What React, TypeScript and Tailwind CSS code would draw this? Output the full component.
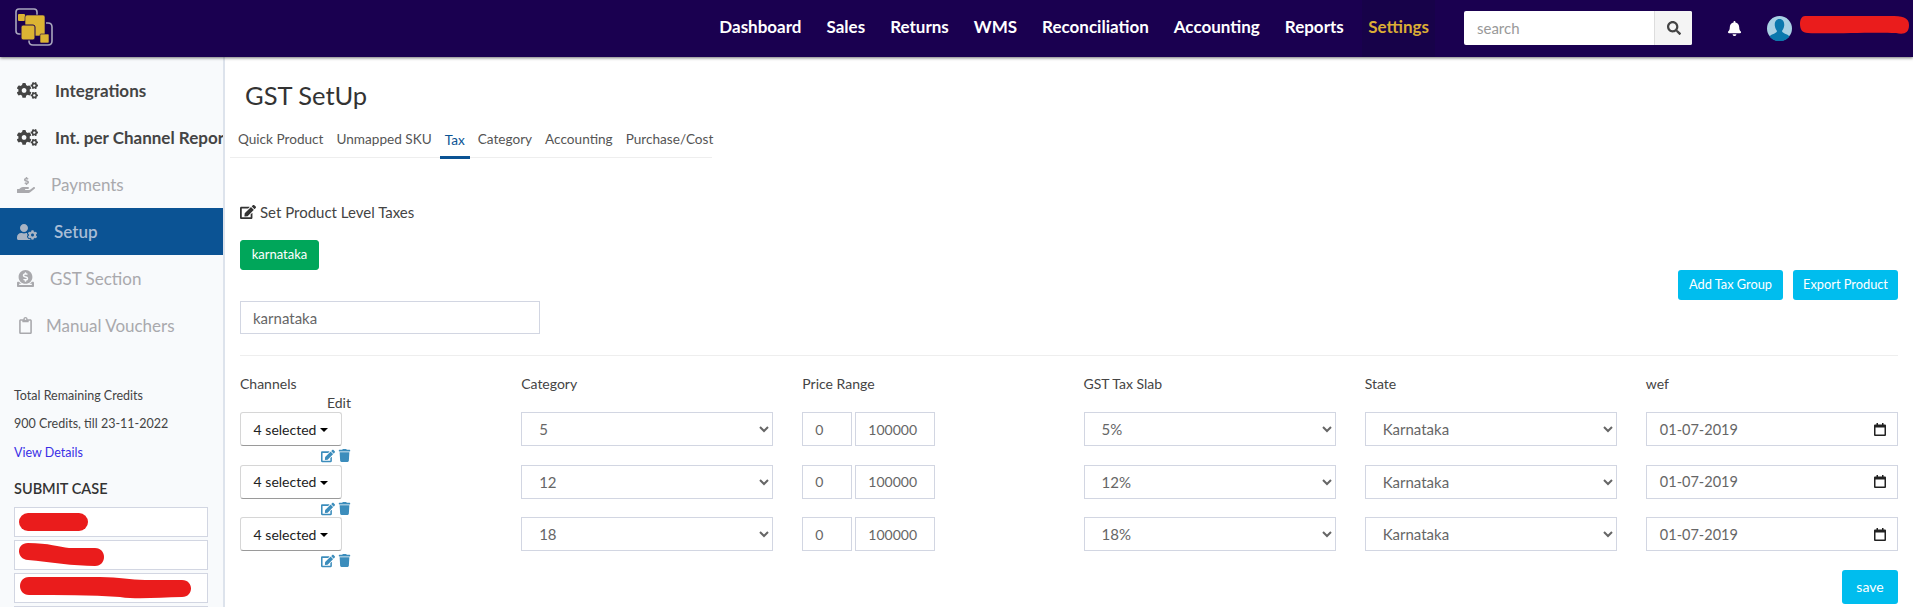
import React from "react";
import { FaCogs, FaHandHoldingUsd, FaUserCog, FaDonate, FaRegClipboard, FaEdit, FaTrash, FaSearch, FaBell } from "react-icons/fa";

const nav = ["Dashboard", "Sales", "Returns", "WMS", "Reconciliation", "Accounting", "Reports"];

function Logo() {
  return (
    <svg width="42" height="42" viewBox="0 0 42 42" fill="none">
      <path d="M9 26 H5 Q2 26 2 23 V4 Q2 1 5 1 H20 Q23 1 23 4 V7" stroke="#a9a6bd" strokeWidth="1.6" />
      <path d="M32 15 H34 Q38 15 38 19 V33 Q38 37 34 37 H19 Q15 37 15 33 V31" stroke="#a9a6bd" strokeWidth="1.6" />
      <rect x="4" y="6" width="7" height="7" rx="1" fill="#dcb333" />
      <rect x="11" y="7" width="20" height="21" rx="2" fill="#dcb333" stroke="#1a0050" strokeWidth="0.6" />
      <rect x="7" y="17" width="14" height="15" rx="2" fill="#dcb333" stroke="#1a0050" strokeWidth="1" />
      <rect x="26" y="26" width="9" height="9" rx="1" fill="#dcb333" stroke="#1a0050" strokeWidth="0.6" />
    </svg>
  );
}

function Avatar() {
  return (
    <svg width="25" height="25" viewBox="0 0 25 25">
      <circle cx="12.5" cy="12.5" r="12.5" fill="#a8d1e4" />
      <path d="M12.5 3 C9 3 7.5 6 7.8 9.5 C8 12 9.2 14 10 15 C10 16.5 8 17.3 5 18.5 C3.8 19 3 20 2.6 20.5 A12.5 12.5 0 0 0 22.4 20.5 C22 20 21.2 19 20 18.5 C17 17.3 15 16.5 15 15 C15.8 14 17 12 17.2 9.5 C17.5 6 16 3 12.5 3Z" fill="#0a78ad" />
    </svg>
  );
}

function SideItem({ icon, label, cls, gap }: { icon: React.ReactNode; label: string; cls: string; gap: string }) {
  return (
    <div className={`flex h-[47px] items-center overflow-hidden whitespace-nowrap pl-[17px] ${cls}`}>
      <span className={`flex shrink-0 ${gap}`}>{icon}</span>
      <span>{label}</span>
    </div>
  );
}

function Caret() {
  return <span className="ml-[4px] mt-[2px] inline-block border-x-[4px] border-t-[4px] border-x-transparent border-t-black" />;
}

function Sel({ value }: { value: string }) {
  return (
    <select
      defaultValue={value}
      className="h-[34px] w-full border border-[#d2d6e2] bg-white pl-[13px] text-[15px] text-[#666]"
    >
      <option>{value}</option>
    </select>
  );
}

function CalendarIcon() {
  return (
    <svg width="12" height="13" viewBox="0 0 12 13" className="shrink-0">
      <path d="M1 1.5h1.5V0h1.5v1.5h4V0h1.5v1.5H11a1 1 0 0 1 1 1V12a1 1 0 0 1-1 1H1a1 1 0 0 1-1-1V2.5a1 1 0 0 1 1-1Z M1.5 4.5V11.5h9V4.5Z" fill="#222" fillRule="evenodd" />
    </svg>
  );
}

function Row({ cat, slab }: { cat: string; slab: string }) {
  return (
    <div className="grid h-[52.5px] grid-cols-6 gap-x-[29px]">
      <div>
        <button className="flex h-[34px] w-[102px] items-center justify-center rounded-[3px] border border-[#d6d6d6] border-b-[#9a9a9a] bg-white text-[14px] text-[#222]">
          4 selected
          <Caret />
        </button>
        <div className="mt-[3px] flex w-[111px] justify-end gap-[3px] text-[14px] text-[#3c8dbc]">
          <FaEdit />
          <FaTrash className="text-[13px]" />
        </div>
      </div>
      <Sel value={cat} />
      <div className="flex gap-[3px]">
        <input readOnly value="0" className="h-[34px] w-[50px] border border-[#d2d6e2] pl-[12px] text-[14px] text-[#666]" />
        <input readOnly value="100000" className="h-[34px] w-[80px] border border-[#d2d6e2] pl-[12px] text-[14px] text-[#666]" />
      </div>
      <Sel value={slab} />
      <Sel value="Karnataka" />
      <div className="flex h-[34px] items-center justify-between border border-[#d2d6e2] pl-[13px] pr-[11px] text-[14.5px] text-[#666]">
        <span>01-07-2019</span>
        <CalendarIcon />
      </div>
    </div>
  );
}

export default function App() {
  return (
    <div className="flex h-[607px] flex-col overflow-hidden bg-white font-['Lato','Noto_Sans',sans-serif] text-[14px] text-[#444]">
      <header className="relative z-10 flex h-[57px] shrink-0 items-center bg-[#1a0050] shadow-[0_1px_3px_rgba(0,0,0,0.55)]">
        <div className="ml-[14px]">
          <Logo />
        </div>
        <nav className="ml-auto flex h-full items-stretch pb-[3px] text-[17px] font-bold text-white">
          {nav.map((n) => (
            <a key={n} className="flex items-center px-[12.5px]">{n}</a>
          ))}
          <a className="-mb-[3px] ml-[6px] flex items-center bg-[#170249] px-[6px] pb-[3px] text-[#dcae35]">Settings</a>
        </nav>
        <div className="-mt-[1px] ml-[29px] flex h-[34px] w-[228px] overflow-hidden rounded-[2px] bg-white">
          <input placeholder="search" className="min-w-0 flex-1 pl-[13px] text-[15px] text-[#555] placeholder:text-[#999] outline-none" />
          <span className="flex w-[38px] items-center justify-center border-l border-[#ddd] bg-[#f4f4f4] text-[14px] text-[#444]">
            <FaSearch />
          </span>
        </div>
        <span className="ml-[35px] text-[15px] text-white"><FaBell /></span>
        <span className="ml-[25px] flex"><Avatar /></span>
        <svg className="mb-[8px] ml-[8px] mr-[4px]" width="109" height="20" viewBox="0 0 109 20">
          <path d="M5 1 H90 C102 1 109 2 109 10 C109 18 104 20 96 18 C70 17 30 19 8 18 C2 18 0 14 0 9 C0 4 2 1 5 1Z" fill="#ea1c1c" />
        </svg>
      </header>

      <div className="flex min-h-0 flex-1">
        <aside className="w-[225px] shrink-0 border-r-2 border-[#dde3ec] bg-[#f8fafc] pt-[10px] text-[17px]">
          <SideItem icon={<FaCogs className="text-[21px] text-[#444]" />} label="Integrations" cls="font-bold text-[#444]" gap="w-[38px]" />
          <SideItem icon={<FaCogs className="text-[21px] text-[#444]" />} label="Int. per Channel Reports" cls="font-bold text-[#444]" gap="w-[38px]" />
          <SideItem icon={<FaHandHoldingUsd className="text-[18px] text-[#a9a9ad]" />} label="Payments" cls="text-[#a9a9ad]" gap="w-[34px]" />
          <SideItem icon={<FaUserCog className="text-[20px] text-[#a9b4c4]" />} label="Setup" cls="bg-[#0b5394] text-[#a9bdd6] font-semibold" gap="w-[37px]" />
          <SideItem icon={<FaDonate className="text-[17px] text-[#a9a9ad]" />} label="GST Section" cls="text-[#a9a9ad]" gap="w-[33px]" />
          <SideItem icon={<FaRegClipboard className="text-[17px] text-[#a9a9ad]" />} label="Manual Vouchers" cls="text-[#a9a9ad]" gap="w-[29px]" />
          <div className="mt-[33px] pl-[14px] text-[12.5px] text-[#444]">
            <div className="flex h-[28.5px] items-center">Total Remaining Credits</div>
            <div className="flex h-[28.5px] items-center">900 Credits, till 23-11-2022</div>
            <div className="flex h-[28.5px] items-center text-[#3a2fe6]">View Details</div>
            <div className="mt-[11px] text-[14.5px] font-semibold leading-[20px] text-[#333]">SUBMIT CASE</div>
            <div className="mt-[8px] flex w-[194px] flex-col gap-[3px]">
              <div className="flex h-[30px] items-center border border-[#d2d6e2] bg-white pl-[4px]">
                <svg width="70" height="18" viewBox="0 0 70 18"><rect width="69" height="18" rx="9" fill="#ea1c1c" /></svg>
              </div>
              <div className="flex h-[30px] items-center border border-[#d2d6e2] bg-white pl-[4px]">
                <svg width="86" height="24" viewBox="0 0 86 24"><path d="M9 0 C30 0 40 4 50 5 H76 C88 5 88 23 76 23 C55 23 30 19 9 17 C-3 16 -3 0 9 0Z" fill="#ea1c1c" /></svg>
              </div>
              <div className="flex h-[30px] items-center border border-[#d2d6e2] bg-white pl-[5px]">
                <svg width="172" height="22" viewBox="0 0 172 22"><path d="M9 0 H80 C100 0 110 3 125 3 H162 C174 3 174 20 162 20 C140 20 120 23 100 20 C70 18 40 18 9 18 C-3 18 -3 0 9 0Z" fill="#ea1c1c" /></svg>
              </div>
              <div className="h-[30px] border border-[#d2d6e2] bg-white" />
            </div>
          </div>
        </aside>

        <main className="min-w-0 flex-1">
          <h1 className="ml-[20px] mt-[21px] text-[25.5px] font-normal leading-[34px] text-[#333]">GST SetUp</h1>
          <div className="ml-[5px] mt-[8px] flex h-[38px] w-[482px] gap-[3px] whitespace-nowrap border-b border-[#eeeeee] pl-[3px] text-[13.6px]">
            {["Quick Product", "Unmapped SKU", "Tax", "Category", "Accounting", "Purchase/Cost"].map((t) => (
              <a
                key={t}
                className={
                  t === "Tax"
                    ? "flex h-[39px] items-center border-b-[3px] border-[#0b5394] px-[5px] pt-[4px] text-[#0b5394]"
                    : "flex h-[37px] items-center px-[5px] pt-[1px] text-[#555]"
                }
              >
                {t}
              </a>
            ))}
          </div>

          <div className="ml-[15px] mr-[15px]">
            <div className="mt-[44px] flex h-[20px] items-center gap-[4px] text-[15px] text-[#444]">
              <FaEdit className="text-[16px] text-[#333]" />
              <span>Set Product Level Taxes</span>
            </div>
            <button className="mt-[18px] flex h-[30px] w-[79px] items-center justify-center rounded-[3px] border border-[#00a65a] bg-[#00a65a] text-[13px] text-white">
              karnataka
            </button>
            <div className="flex items-start justify-between">
              <input readOnly value="karnataka" className="mt-[31px] h-[33px] w-[300px] border border-[#d2d6e2] pl-[12px] text-[15px] text-[#666]" />
              <div className="flex gap-[10px]">
                <button className="h-[30px] w-[105px] rounded-[3px] bg-[#00bdee] text-[12.8px] text-white">Add Tax Group</button>
                <button className="h-[30px] w-[105px] rounded-[3px] bg-[#00bdee] text-[12.8px] text-white">Export Product</button>
              </div>
            </div>
            <div className="mt-[21px] border-t border-[#eeeeee]" />

            <div className="mt-[18px] grid h-[38.4px] grid-cols-6 gap-x-[29px] text-[#444]">
              <div className="leading-[20px]">
                <div>Channels</div>
                <div className="w-[111px] text-right leading-[18px]">Edit</div>
              </div>
              <div className="leading-[20px]">Category</div>
              <div className="leading-[20px]">Price Range</div>
              <div className="leading-[20px]">GST Tax Slab</div>
              <div className="leading-[20px]">State</div>
              <div className="leading-[20px]">wef</div>
            </div>

            <Row cat="5" slab="5%" />
            <Row cat="12" slab="12%" />
            <Row cat="18" slab="18%" />
            <div className="flex justify-end">
              <button className="h-[34px] w-[56px] rounded-[3px] bg-[#00bdee] text-[14px] text-white">save</button>
            </div>
          </div>
        </main>
      </div>
    </div>
  );
}
